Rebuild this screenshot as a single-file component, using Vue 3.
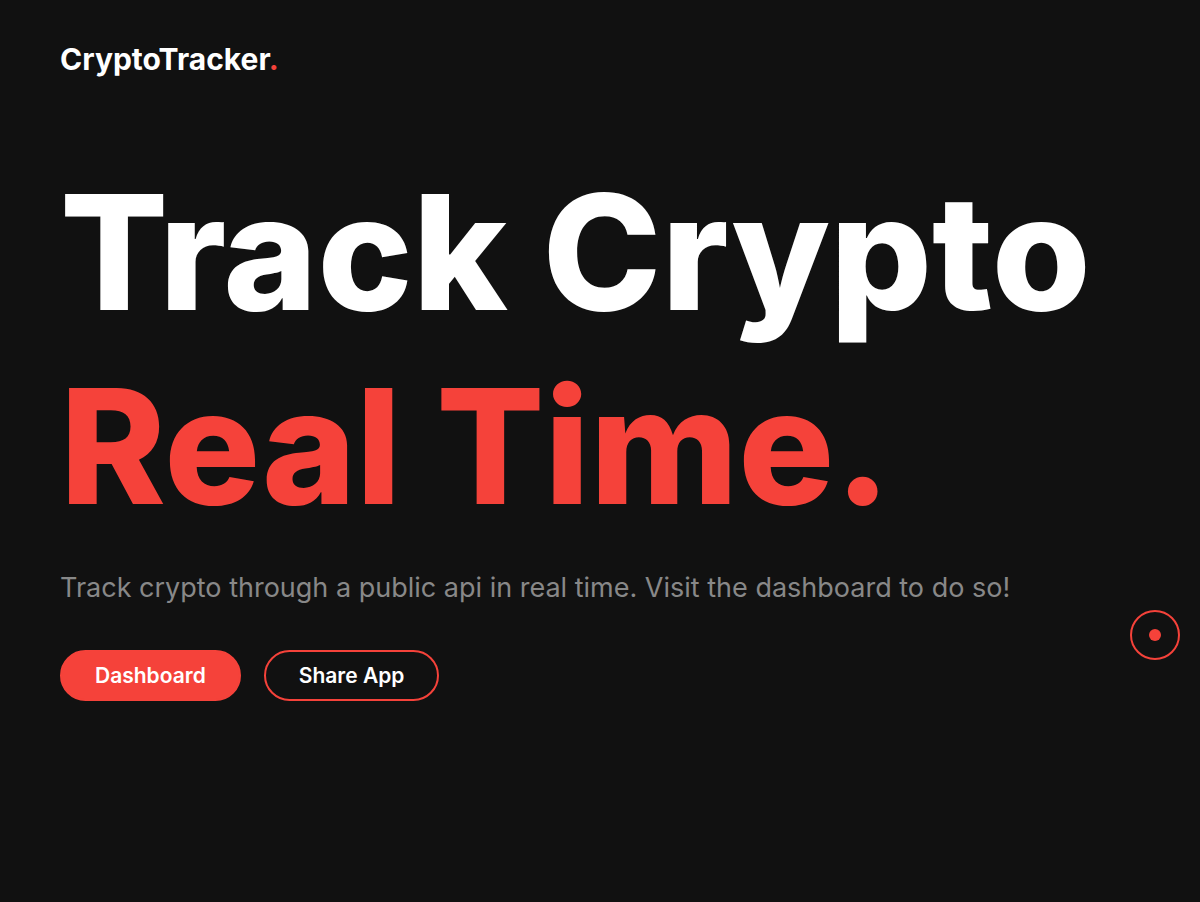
<script setup>
async function shareApp() {
  if (navigator.share) {
    await navigator.share({ title: 'CryptoTracker', url: location.href })
  }
}
</script>

<template>
  <div class="page">
    <header class="header">
      <a class="logo" href="#">CryptoTracker<span class="accent">.</span></a>
    </header>
    <main class="hero">
      <h1 class="title">
        <span class="line">Track Crypto</span>
        <span class="line accent">Real Time.</span>
      </h1>
      <p class="intro">Track crypto through a public api in real time. Visit the dashboard to do so!</p>
      <div class="actions">
        <a class="btn primary" href="#dashboard">Dashboard</a>
        <button class="btn outline" type="button" @click="shareApp">Share App</button>
      </div>
    </main>
    <div class="cursor-ring" aria-hidden="true"><span class="cursor-dot"></span></div>
  </div>
</template>

<style>
body {
  background: #111;
}
</style>

<style scoped>
.page {
  font-family: Inter, sans-serif;
  color: #fff;
  min-height: 100vh;
  background: #111;
}

.header {
  padding: 41px 60px;
}

.logo {
  display: block;
  width: fit-content;
  font-size: 30px;
  line-height: 36px;
  font-weight: 700;
  color: #fff;
  text-decoration: none;
}

.accent {
  color: #f5423a;
}

.hero {
  padding: 37px 60px;
}

.title {
  margin: 0;
  font-size: 160px;
  line-height: 194px;
  font-weight: 800;
}

.line {
  display: block;
  white-space: nowrap;
}

.intro {
  margin: 28px 0 0;
  font-size: 27px;
  line-height: 34px;
  color: #888;
}

.actions {
  display: flex;
  gap: 23px;
  margin-top: 45px;
}

.btn {
  box-sizing: border-box;
  padding: 10px 33px;
  border: 2px solid #f5423a;
  border-radius: 30px;
  font-family: inherit;
  font-size: 21px;
  line-height: 27px;
  font-weight: 600;
  color: #fff;
  text-decoration: none;
  cursor: pointer;
}

.primary {
  background: #f5423a;
}

.outline {
  background: transparent;
}

.cursor-ring {
  position: fixed;
  top: 610px;
  right: 20px;
  box-sizing: border-box;
  width: 50px;
  height: 50px;
  display: grid;
  place-items: center;
  border: 2px solid #f5423a;
  border-radius: 50%;
  pointer-events: none;
}

.cursor-dot {
  width: 12px;
  height: 12px;
  border-radius: 50%;
  background: #f5423a;
}
</style>
